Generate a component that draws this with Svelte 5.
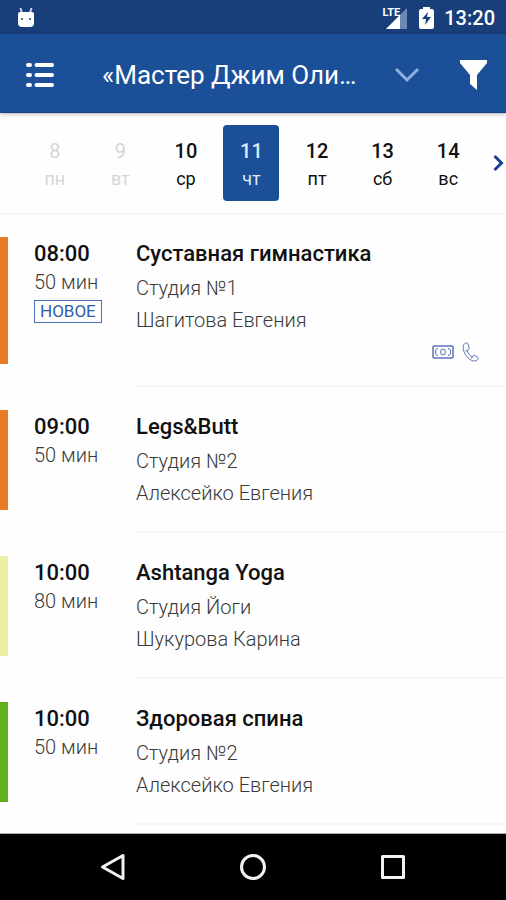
<script>
    const days = [
        { date: 8, name: 'пн', past: true },
        { date: 9, name: 'вт', past: true },
        { date: 10, name: 'ср' },
        { date: 11, name: 'чт' },
        { date: 12, name: 'пт' },
        { date: 13, name: 'сб' },
        { date: 14, name: 'вс' }
    ];

    const lessons = [
        { time: '08:00', duration: '50 мин', title: 'Суставная гимнастика', room: 'Студия №1', trainer: 'Шагитова Евгения', color: 'orange', isNew: true, paid: true },
        { time: '09:00', duration: '50 мин', title: 'Legs&Butt', room: 'Студия №2', trainer: 'Алексейко Евгения', color: 'orange' },
        { time: '10:00', duration: '80 мин', title: 'Ashtanga Yoga', room: 'Студия Йоги', trainer: 'Шукурова Карина', color: 'lime' },
        { time: '10:00', duration: '50 мин', title: 'Здоровая спина', room: 'Студия №2', trainer: 'Алексейко Евгения', color: 'green' }
    ];

    let selected = 11;

    const selectDay = (day) => {
        selected = day.date;
    }
</script>

<style>
:global(body){
    margin: 0;
    background: #fefefe;
}
.app{
    display: flex;
    flex-direction: column;
    min-height: 100vh;
    font-family: Roboto, "Liberation Sans", sans-serif;
    color: #111;
}
button{
    display: flex;
    align-items: center;
    justify-content: center;
    padding: 0;
    border: none;
    background: none;
    font-family: inherit;
    color: inherit;
    cursor: pointer;
}
svg{
    display: block;
    flex: none;
}
.status{
    display: flex;
    align-items: center;
    box-sizing: border-box;
    height: 34px;
    padding: 2px 11px 0 17px;
    background: #193f7b;
    color: #fff;
}
.status-right{
    display: flex;
    align-items: center;
    gap: 12px;
    margin-left: auto;
}
.signal{
    display: flex;
    align-items: flex-start;
}
.lte{
    font-size: 11px;
    line-height: 10px;
    font-weight: 700;
    margin-right: -14px;
    z-index: 1;
}
.clock{
    font-size: 20px;
    line-height: 24px;
    font-weight: 500;
    margin-left: -2px;
}
.header{
    display: flex;
    align-items: center;
    box-sizing: border-box;
    height: 79px;
    padding: 3px 19px 0 25px;
    background: #1b5099;
    border-bottom: 1px solid #123f86;
    box-shadow: 0 1px 4px rgba(0, 0, 0, 0.3);
    color: #fff;
    z-index: 1;
}
.club{
    flex: 1;
    justify-content: space-between;
    min-width: 0;
    margin: 0 40px 0 47px;
    font-size: 26px;
    line-height: 32px;
}
.club span{
    white-space: nowrap;
}
.week{
    display: flex;
    padding: 12px 2px 12px 22px;
    border-bottom: 2px solid #f5f5f5;
}
.days{
    flex: 1;
    display: grid;
    grid-template-columns: repeat(7, 1fr);
    justify-items: center;
}
.day{
    flex-direction: column;
    box-sizing: border-box;
    width: 56px;
    height: 76px;
    padding-top: 4px;
    border-radius: 4px;
    font-size: 20px;
    line-height: 28px;
    font-weight: 500;
}
.day small{
    font-size: 18px;
    line-height: 28px;
    font-weight: 400;
}
.past{
    color: #d6d6d6;
    font-weight: 400;
}
.selected{
    background: #1b5099;
    color: #dfe9f8;
}
.next{
    width: 23px;
    justify-content: flex-end;
}
.lessons{
    flex: 1;
    margin: 0;
    padding: 0;
    list-style: none;
}
.lesson{
    display: flex;
    align-items: stretch;
}
.mark{
    width: 8px;
    margin: 23px 0;
}
.lesson:first-child .mark{
    margin-top: 22px;
}
.orange{
    background: #e77b26;
}
.lime{
    background: #ecefa3;
}
.green{
    background: #63b01f;
}
.when{
    width: 102px;
    margin-left: 26px;
    padding-top: 24px;
}
.info{
    flex: 1;
    padding: 24px 27px 20px 0;
    border-bottom: 2px solid #f5f5f5;
}
.lesson:first-child .when,
.lesson:first-child .info{
    padding-top: 23px;
}
.time,
.title{
    margin: 0;
    font-size: 22px;
    line-height: 32px;
    font-weight: 500;
}
.duration,
.info p{
    margin: 0;
    font-size: 20px;
    font-weight: 300;
    color: #3a3a3a;
}
.duration{
    line-height: 25px;
}
.info p{
    line-height: 32px;
}
.title{
    padding-bottom: 2px;
}
.info .trainer{
    padding-bottom: 2px;
}
.badge{
    display: inline-block;
    margin-top: 5px;
    padding: 0 5px;
    border: 1px solid #4a70b4;
    font-size: 17px;
    line-height: 21px;
    color: #2f5cab;
}
.options{
    display: flex;
    align-items: center;
    justify-content: flex-end;
    gap: 8px;
    height: 27px;
}
.nav{
    display: grid;
    grid-template-columns: repeat(3, 1fr);
    height: 66px;
    padding: 0 43px;
    border-top: 1px solid #aaa;
    background: #000;
}
</style>

<div class="app">
    <div class="status">
        <svg width="18" height="20" viewBox="0 0 18 20">
            <path d="M3.500 0l1.500 5M14.500 0L13 5" stroke="#c5d2e8" stroke-width="2" />
            <path d="M1 6q0-2 2-2h12q2 0 2 2v9q0 4-4 4H5q-4 0-4-4z" fill="#fff" />
            <circle cx="5" cy="11" r="1" fill="#193f7b" />
            <circle cx="13" cy="11" r="1" fill="#193f7b" />
        </svg>
        <div class="status-right">
            <div class="signal">
                <span class="lte">LTE</span>
                <svg width="21" height="21" viewBox="0 0 21 21">
                    <path d="M21 0v21H0z" fill="#6d88b3" />
                    <path d="M14 7v14H0z" fill="#fff" />
                    <path d="M0 0h9v9H0z" fill="#193f7b" />
                </svg>
            </div>
            <svg width="15" height="22" viewBox="0 0 15 22">
                <path d="M4 2V0h7v2h2q2 0 2 2v16q0 2-2 2H2q-2 0-2-2V4q0-2 2-2z" fill="#fff" />
                <path d="M9 5l-6 7h4l-1 6 6-8H8z" fill="#193f7b" />
            </svg>
            <span class="clock">13:20</span>
        </div>
    </div>

    <header class="header">
        <button aria-label="Меню">
            <svg width="30" height="26" viewBox="0 0 30 26" fill="none" stroke="#fff" stroke-width="4" stroke-linecap="round">
                <path d="M3 3h2M11.500 3h15.500M3 13h2M11.500 13h15.500M3 23h2M11.500 23h15.500" />
            </svg>
        </button>
        <button class="club">
            <span>«Мастер Джим Оли…</span>
            <svg width="26" height="16" viewBox="0 0 26 16" fill="none" stroke="#8fb0de" stroke-width="3">
                <path d="M2 2l11 11L24 2" />
            </svg>
        </button>
        <button aria-label="Фильтр">
            <svg width="27" height="34" viewBox="0 0 27 34">
                <path d="M0 2h27v3L17 17v15l-7-6v-9L0 5z" fill="#fff" />
            </svg>
        </button>
    </header>

    <div class="week">
        <div class="days">
            {#each days as day}
                <button class="day" class:past={day.past} class:selected={day.date === selected} on:click={() => selectDay(day)}>
                    {day.date}
                    <small>{day.name}</small>
                </button>
            {/each}
        </div>
        <button class="next" aria-label="Следующая неделя">
            <svg width="11" height="18" viewBox="0 0 11 18" fill="none" stroke="#1c3f94" stroke-width="3">
                <path d="M1.500 2l7 7-7 7" />
            </svg>
        </button>
    </div>

    <ul class="lessons">
        {#each lessons as lesson}
            <li class="lesson">
                <div class="mark {lesson.color}"></div>
                <div class="when">
                    <div class="time">{lesson.time}</div>
                    <div class="duration">{lesson.duration}</div>
                    {#if lesson.isNew}
                        <span class="badge">НОВОЕ</span>
                    {/if}
                </div>
                <div class="info">
                    <h2 class="title">{lesson.title}</h2>
                    <p>{lesson.room}</p>
                    <p class="trainer">{lesson.trainer}</p>
                    {#if lesson.paid}
                        <div class="options">
                            <svg width="22" height="20" viewBox="0 0 22 20" fill="none" stroke="#5873b8">
                                <rect x="1" y="4" width="20" height="12" rx="1" stroke-width="1.500" />
                                <path d="M6 6.500H5Q5 8 3.500 8v4Q5 12 5 13.500h1M16 6.500h1Q17 8 18.500 8v4Q17 12 17 13.500h-1" />
                                <ellipse cx="11" cy="10" rx="2.500" ry="3" />
                            </svg>
                            <svg width="17" height="20" viewBox="0 0 17 20" fill="none" stroke="#5873b8" stroke-linejoin="round">
                                <path d="M4.500 1C1.500 1 .5 4.500 1.500 8c1.300 4.800 5 10 10 11 2 .4 4-.7 4.800-2.500.2-.6 0-1-.5-1.300l-3-1.700c-.6-.3-1.200-.2-1.600.3l-.9 1.200C8 14 5.800 11 5 8.500l1.500-.7c.6-.3.8-.8.7-1.400L6 2c-.2-.7-.8-1-1.500-1z" />
                                <path d="M5 8.500L3.500 9M10.300 15l-.8 1.500" />
                            </svg>
                        </div>
                    {/if}
                </div>
            </li>
        {/each}
    </ul>

    <nav class="nav">
        <button aria-label="Назад">
            <svg width="26" height="28" viewBox="0 0 26 28" fill="none" stroke="#f2f2f2" stroke-width="3" stroke-linejoin="round">
                <path d="M23 2.500v23L2.500 14z" />
            </svg>
        </button>
        <button aria-label="Домой">
            <svg width="28" height="28" viewBox="0 0 28 28" fill="none" stroke="#f2f2f2" stroke-width="3">
                <circle cx="14" cy="14" r="11.500" />
            </svg>
        </button>
        <button aria-label="Недавние">
            <svg width="26" height="26" viewBox="0 0 26 26" fill="none" stroke="#f2f2f2" stroke-width="3" stroke-linejoin="round">
                <rect x="2.500" y="2.500" width="21" height="21" />
            </svg>
        </button>
    </nav>
</div>
